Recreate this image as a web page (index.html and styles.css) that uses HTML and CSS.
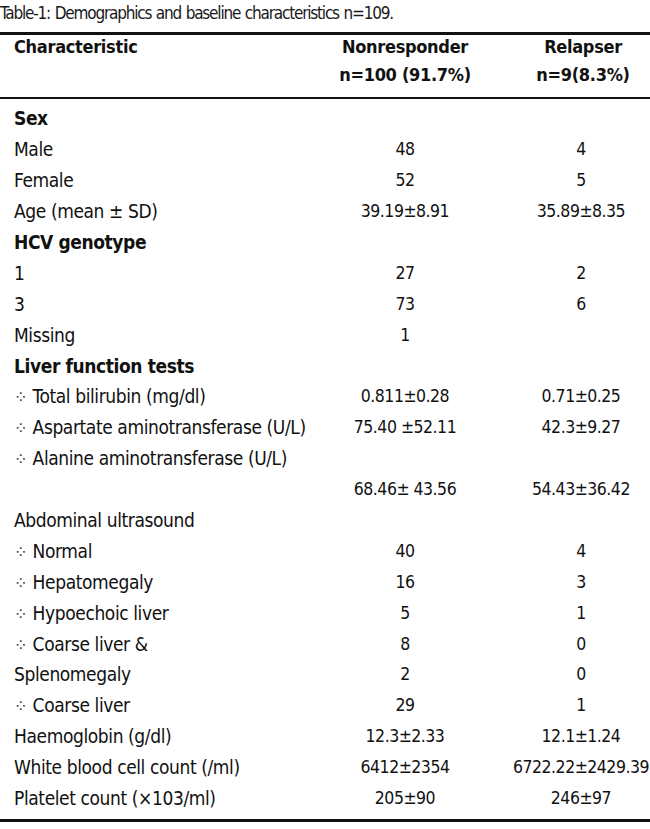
FILE: index.html
```html
<!DOCTYPE html>
<html>
<head>
<meta charset="utf-8">
<link rel="stylesheet" href="styles.css">
</head>
<body>
<div class="caption">Table-1: Demographics and baseline characteristics n=109.</div>
<table class="data">
  <colgroup>
    <col class="c-label">
    <col class="c-non">
    <col class="c-rel">
  </colgroup>
  <thead>
    <tr class="h1"><th class="lab">Characteristic</th><th>Nonresponder</th><th class="rel">Relapser</th></tr>
    <tr class="h2"><th class="lab"></th><th>n=100 (91.7%)</th><th class="rel">n=9(8.3%)</th></tr>
  </thead>
  <tbody>
    <tr class="first"><td class="grp">Sex</td><td></td><td></td></tr>
    <tr><td>Male</td><td>48</td><td class="rel">4</td></tr>
    <tr><td>Female</td><td>52</td><td class="rel">5</td></tr>
    <tr><td>Age (mean ± SD)</td><td>39.19±8.91</td><td class="rel">35.89±8.35</td></tr>
    <tr><td class="grp">HCV genotype</td><td></td><td></td></tr>
    <tr><td>1</td><td>27</td><td class="rel">2</td></tr>
    <tr><td>3</td><td>73</td><td class="rel">6</td></tr>
    <tr><td>Missing</td><td>1</td><td class="rel"></td></tr>
    <tr><td class="grp">Liver function tests</td><td></td><td></td></tr>
    <tr><td><span class="dot">⁘</span> Total bilirubin (mg/dl)</td><td>0.811±0.28</td><td class="rel">0.71±0.25</td></tr>
    <tr><td><span class="dot">⁘</span> Aspartate aminotransferase (U/L)</td><td>75.40 ±52.11</td><td class="rel">42.3±9.27</td></tr>
    <tr><td><span class="dot">⁘</span> Alanine aminotransferase (U/L)</td><td></td><td></td></tr>
    <tr><td></td><td>68.46± 43.56</td><td class="rel">54.43±36.42</td></tr>
    <tr><td>Abdominal ultrasound</td><td></td><td></td></tr>
    <tr><td><span class="dot">⁘</span> Normal</td><td>40</td><td class="rel">4</td></tr>
    <tr><td><span class="dot">⁘</span> Hepatomegaly</td><td>16</td><td class="rel">3</td></tr>
    <tr><td><span class="dot">⁘</span> Hypoechoic liver</td><td>5</td><td class="rel">1</td></tr>
    <tr><td><span class="dot">⁘</span> Coarse liver &amp;</td><td>8</td><td class="rel">0</td></tr>
    <tr><td>Splenomegaly</td><td>2</td><td class="rel">0</td></tr>
    <tr><td><span class="dot">⁘</span> Coarse liver</td><td>29</td><td class="rel">1</td></tr>
    <tr><td>Haemoglobin (g/dl)</td><td>12.3±2.33</td><td class="rel">12.1±1.24</td></tr>
    <tr><td>White blood cell count (/ml)</td><td>6412±2354</td><td class="rel">6722.22±2429.39</td></tr>
    <tr class="last"><td>Platelet count (×103/ml)</td><td>205±90</td><td class="rel">246±97</td></tr>
  </tbody>
</table>
</body>
</html>
```
FILE: styles.css
```css
html, body {
  margin: 0;
  padding: 0;
  background: #ffffff;
}
body {
  font-family: "DejaVu Sans Condensed", "DejaVu Sans", sans-serif;
  color: #111111;
  font-size: 19px;
  width: 650px;
}
.caption {
  height: 32px;
  line-height: 27px;
  font-size: 17px;
  letter-spacing: -1.2px;
  word-spacing: 1px;
  color: #1a1a1a;
}
.data {
  width: 650px;
  border-collapse: collapse;
  table-layout: fixed;
  border-top: 3px solid #111111;
  border-bottom: 3px solid #111111;
}
.c-label { width: 322px; }
.c-non { width: 166px; }
.c-rel { width: 162px; }
.data th {
  font-weight: bold;
  text-align: center;
  padding: 0;
  line-height: 24px;
  font-size: 18px;
  letter-spacing: -0.3px;
  vertical-align: top;
  white-space: nowrap;
}
.data th.lab { text-align: left; padding-left: 14px; }
.data .h1 th { height: 24px; }
.data .h2 th {
  height: 24px;
  padding-top: 4px;
  padding-bottom: 10px;
  border-bottom: 2px solid #111111;
}
.data td {
  height: 30.9px;
  padding: 0;
  text-align: center;
  vertical-align: middle;
  white-space: nowrap;
  font-size: 17.5px;
  letter-spacing: -0.5px;
}
.data td:first-child {
  text-align: left;
  padding-left: 14px;
  font-size: 19px;
  letter-spacing: -0.4px;
}
.data .rel { padding-left: 24px; }
.data th.rel { padding-left: 28px; }
.data tr.first td { padding-top: 4px; }
.data tr.last td { padding-bottom: 6px; }
.grp { font-weight: bold; }
.dot { font-size: 18px; color: #444444; vertical-align: 0; letter-spacing: 0; }
```
